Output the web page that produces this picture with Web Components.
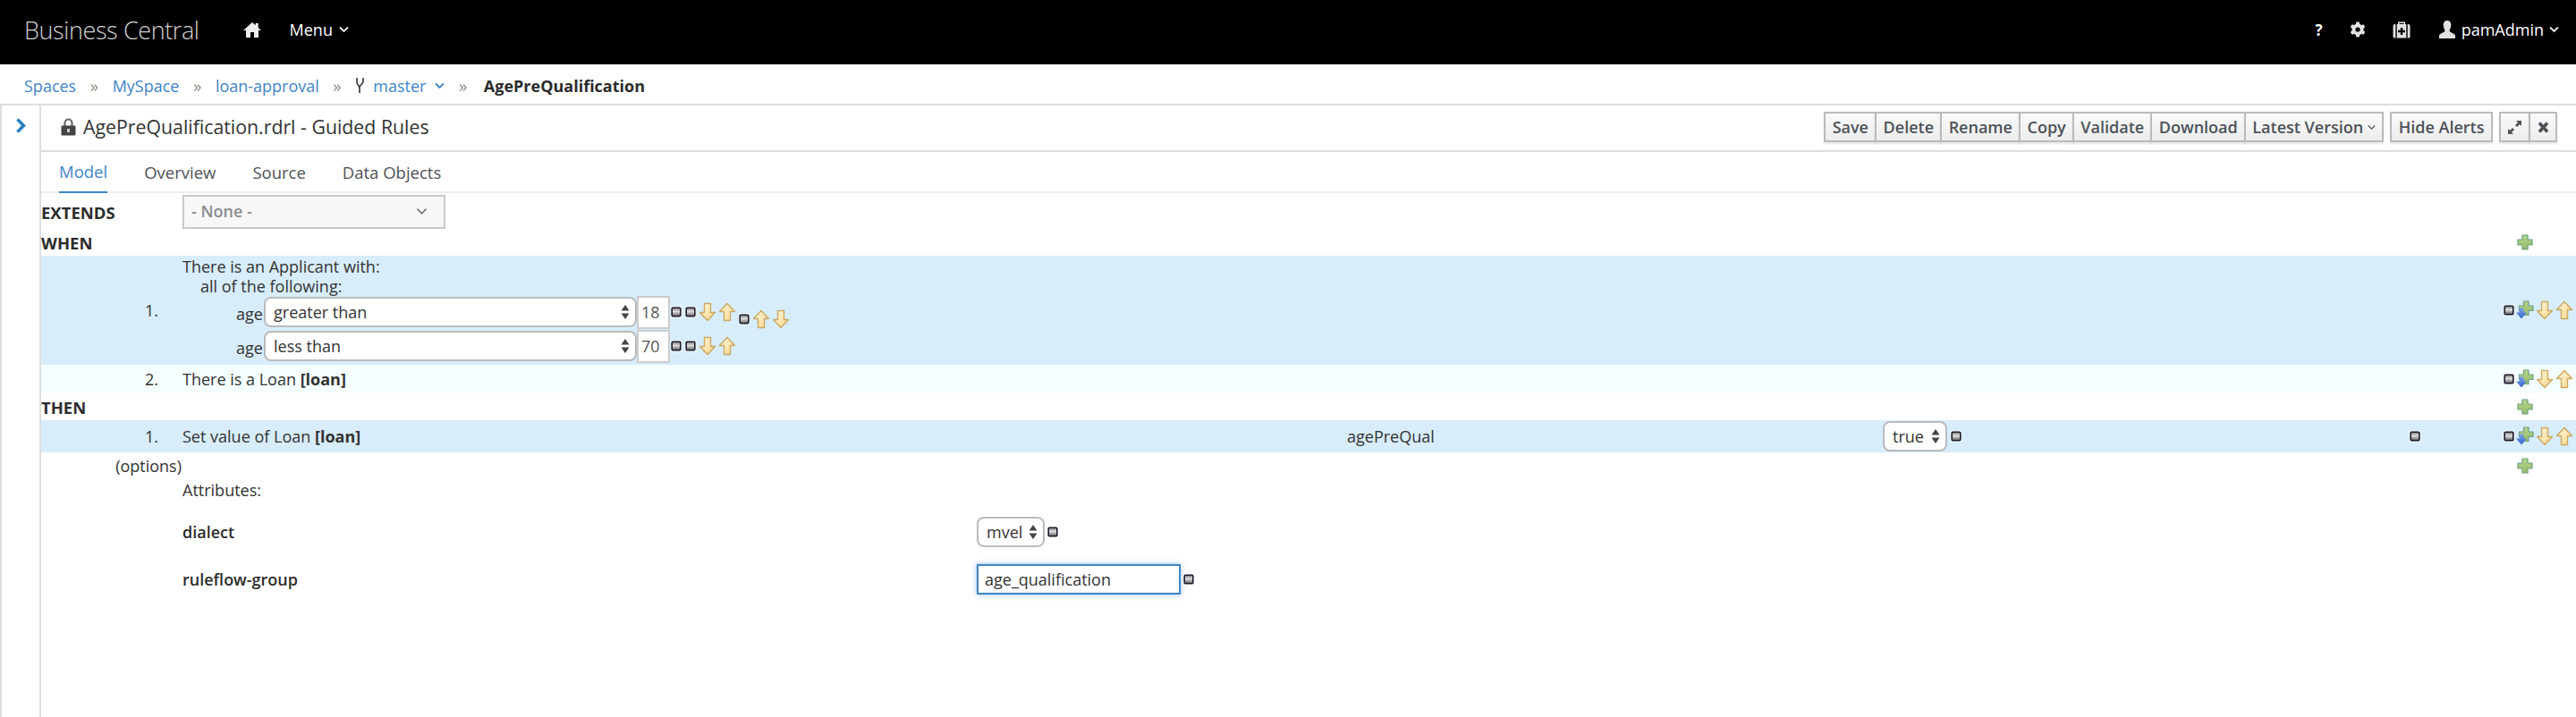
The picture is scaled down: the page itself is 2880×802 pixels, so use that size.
<!DOCTYPE html>
<html><head><meta charset="utf-8">
<style>
html,body{margin:0;padding:0;height:802px;overflow:hidden;background:#fff;font-family:"Open Sans","Liberation Sans",sans-serif;color:#363636}
</style></head><body>
<bc-app></bc-app>
<script>
const ICONS={
 minus:[14,14,`<defs><linearGradient id="g" x1="0" y1="0" x2="0" y2="1"><stop offset="0" stop-color="#777"/><stop offset=".45" stop-color="#ddd"/><stop offset=".6" stop-color="#bbb"/><stop offset="1" stop-color="#555"/></linearGradient></defs><rect x=".5" y=".5" width="13" height="13" fill="#fff" opacity=".7"/><rect x="2.200" y="2.200" width="9.600" height="9.600" rx="1" fill="url(#g)" stroke="#1c1c2a" stroke-width="1.600"/>`],
 down:[20,22,`<defs><linearGradient id="g" x1="0" y1="0" x2="1" y2="1"><stop offset="0" stop-color="#fff8dc"/><stop offset="1" stop-color="#f7d58a"/></linearGradient></defs><path d="M6.500 1.500h7v10h5L10 20.500 1.500 11.500h5z" fill="url(#g)" stroke="#cda862" stroke-width="1.400" stroke-linejoin="round"/>`],
 up:[20,22,`<defs><linearGradient id="g" x1="0" y1="0" x2="1" y2="1"><stop offset="0" stop-color="#fff8dc"/><stop offset="1" stop-color="#f7d58a"/></linearGradient></defs><path d="M6.500 20.500h7v-10h5L10 1.500 1.500 10.500h5z" fill="url(#g)" stroke="#cda862" stroke-width="1.400" stroke-linejoin="round"/>`],
 plus:[18,18,`<defs><linearGradient id="g" x1="0" y1="0" x2="0" y2="1"><stop offset="0" stop-color="#b4d487"/><stop offset="1" stop-color="#98bb6c"/></linearGradient></defs><path d="M6 1h6v5h5v6h-5v5H6v-5H1V6h5z" fill="url(#g)" stroke="#6ba283" stroke-width="1.200" stroke-linejoin="round"/>`],
 addmove:[20,22,`<defs><linearGradient id="g" x1="0" y1="0" x2="0" y2="1"><stop offset="0" stop-color="#b4d487"/><stop offset="1" stop-color="#98bb6c"/></linearGradient><linearGradient id="b" x1="0" y1="0" x2="0" y2="1"><stop offset="0" stop-color="#7fa3ea"/><stop offset="1" stop-color="#2f63cf"/></linearGradient></defs><path d="M8.500 1h5.500v5h5v5.500h-5v5H8.500v-5H3.500V6h5z" fill="url(#g)" stroke="#6ba283" stroke-width="1.200" stroke-linejoin="round"/><path d="M3.500 8.500h5v5h3.500L6 20.500 0 13.500h3.500z" fill="url(#b)"/>`]
};
const def=(n,html)=>customElements.define(n,class extends HTMLElement{constructor(){super();this.attachShadow({mode:'open'}).innerHTML=html}});

customElements.define('rule-icon',class extends HTMLElement{connectedCallback(){if(this.shadowRoot)return;const k=this.getAttribute('t'),[w,h,b]=ICONS[k];
 this.attachShadow({mode:'open'}).innerHTML=`<style>:host{display:inline-flex;flex:none;width:${w}px;height:${h}px}svg{display:block}</style><svg width="${w}" height="${h}" viewBox="0 0 ${w} ${h}">${b}</svg>`;}});

def('app-header',`<style>
:host{display:flex;align-items:center;height:72px;background:#000;color:#fff;font-size:18px;flex:none;box-sizing:border-box;padding:0 19px 6px 27px}
.brand{font-size:27px;font-weight:300;color:#d1d1d1;letter-spacing:-.4px;margin-right:49px}
.it{display:flex;align-items:center}
.sp{flex:1}
svg{display:block}
</style>
<span class="brand">Business Central</span>
<span class="it" style="margin-right:32px"><svg width="20" height="18" viewBox="0 0 20 18"><path d="M10 1 0 10h3v8h5v-6h4v6h5v-8h3l-3.300-3V2h-3v2.300z" fill="#eee"/></svg></span>
<span class="it">Menu<svg style="margin-left:7px" width="11" height="8" viewBox="0 0 11 8"><path d="M1 1.500l4.500 4.500L10 1.500" fill="none" stroke="#eee" stroke-width="1.800"/></svg></span>
<span class="sp"></span>
<span class="it" style="font-weight:700;font-size:17px;margin-right:30px">?</span>
<span class="it" style="margin-right:30px"><svg width="18" height="18" viewBox="0 0 18 18"><g fill="#e2e2e2"><circle cx="9" cy="9" r="6.500"/><rect x="7" y="0.500" width="4" height="17" rx="1"/><rect x="7" y="0.500" width="4" height="17" rx="1" transform="rotate(60 9 9)"/><rect x="7" y="0.500" width="4" height="17" rx="1" transform="rotate(120 9 9)"/></g><circle cx="9" cy="9" r="2.600" fill="#000"/></svg></span>
<span class="it" style="margin-right:32px"><svg width="20" height="20" viewBox="0 0 20 20"><path d="M6 4V1.500h8V4h3.500q2 0 2 2v12q0 1.500-2 1.500H2.500q-2 0-2-1.500V6q0-2 2-2zM7.500 4h5V3h-5z" fill="#e2e2e2"/><path d="M4 4v15.500M16 4v15.500" stroke="#000" stroke-width="1.400"/><path d="M8.800 8h2.400v2.800H14v2.400h-2.800V16H8.800v-2.800H6v-2.400h2.800z" fill="#000"/></svg></span>
<span class="it"><svg style="margin-right:7px" width="18" height="20" viewBox="0 0 18 20"><path d="M9 0c3 0 4.300 2.200 4.300 5S11.700 10 11.500 11.500c0 1.500 6.500 3 6.500 5.500v3H0v-3c0-2.500 6.500-4 6.500-5.500C6.300 10 4.700 7.800 4.700 5S6 0 9 0z" fill="#e2e2e2"/></svg><span>pamAdmin</span><svg style="margin-left:6px" width="11" height="8" viewBox="0 0 11 8"><path d="M1 1.500l4.500 4.500L10 1.500" fill="none" stroke="#eee" stroke-width="1.800"/></svg></span>`);

def('bread-crumb',`<style>
:host{display:flex;align-items:center;height:46px;box-sizing:border-box;border-bottom:2px solid #dedede;padding:4px 0 0 27px;font-size:18px;color:#3f85c6;flex:none}
.s{color:#8f8f8f;margin:0 15.500px;font-size:19px}
b{color:#2b2b2b;font-weight:700;margin-left:3px}
svg{display:block;margin-right:9px}
</style>
<span>Spaces</span><span class="s">»</span><span>MySpace</span><span class="s">»</span><span>loan-approval</span><span class="s">»</span>
<svg width="11" height="20" viewBox="0 0 11 20"><path d="M2 1v5c0 3 3 3.500 3 6.500V18M9 1v4c0 3-4 4-4 7" fill="none" stroke="#333" stroke-width="1.600"/></svg>
<span>master</span><svg style="margin:0 0 0 10px" width="11" height="8" viewBox="0 0 11 8"><path d="M1 1.500l4.500 4.500L10 1.500" fill="none" stroke="#3f85c6" stroke-width="1.800"/></svg><span class="s">»</span><b>AgePreQualification</b>`);

def('side-rail',`<style>
:host{display:flex;justify-content:center;align-items:flex-start;width:46px;box-sizing:border-box;border-left:2px solid #dedede;border-right:2px solid #dedede;padding-top:14px;flex:none}
svg{display:block}
</style><svg width="12" height="17" viewBox="0 0 12 17"><path d="M2.500 1.500l7 7-7 7" fill="none" stroke="#2b7fc3" stroke-width="3.600"/></svg>`);

def('tool-btn',`<style>
:host{display:inline-flex;align-items:center;justify-content:center;height:30px;box-sizing:content-box;border:2px solid #bbb;margin-left:-2px;padding:0 7.300px;background:linear-gradient(#fafafa,#ededed);color:#4d5258;font-size:18px;font-weight:600;box-shadow:0 2px 2px rgba(0,0,0,.1)}
</style><slot></slot>`);

def('title-bar',`<style>
:host{display:flex;align-items:center;height:52px;box-sizing:border-box;border-bottom:2px solid #dedede;padding:0 21px 2px 22px;flex:none}
.t{font-size:21.300px;color:#333;margin:0 0 2px 8px;flex:1}
.g{display:flex;margin-left:7px;padding-left:2px}
svg{display:block}
</style>
<svg width="17" height="20" viewBox="0 0 17 20"><path d="M4.500 9V5.500a4 4 0 0 1 8 0V9" fill="none" stroke="#666" stroke-width="2.200"/><rect x="0.500" y="8.500" width="16" height="11" rx="1.200" fill="#444"/><rect x="7" y="12" width="3" height="4" fill="#ccc"/></svg>
<span class="t">AgePreQualification.rdrl - Guided Rules</span>
<span class="g"><tool-btn>Save</tool-btn><tool-btn>Delete</tool-btn><tool-btn>Rename</tool-btn><tool-btn>Copy</tool-btn><tool-btn>Validate</tool-btn><tool-btn>Download</tool-btn><tool-btn>Latest Version<svg style="margin-left:5px" width="9" height="7" viewBox="0 0 11 8"><path d="M1 1.500l4.500 4.500L10 1.500" fill="none" stroke="#4d5258" stroke-width="1.600"/></svg></tool-btn></span>
<span class="g"><tool-btn>Hide Alerts</tool-btn></span>
<span class="g"><tool-btn><svg width="17" height="17" viewBox="0 0 17 17"><path d="M10 1h6v6l-2-2-3 3-2-2 3-3zM7 16H1v-6l2 2 3-3 2 2-3 3z" fill="#4d5258"/></svg></tool-btn><tool-btn><svg width="13" height="15" viewBox="0 0 13 15"><path d="M2 2.500l9 10M11 2.500l-9 10" stroke="#4d5258" stroke-width="3.600"/></svg></tool-btn></span>`);

def('tab-bar',`<style>
:host{display:flex;height:46px;box-sizing:border-box;border-bottom:2px solid #ededed;padding-left:20px;gap:41px;font-size:18.500px;color:#4d5258;flex:none}
span{display:flex;align-items:center;height:46px;box-sizing:border-box;padding-bottom:2px;margin-bottom:-2px}
.a{color:#3f85c6;border-bottom:2px solid #3f85c6}
</style><span class="a">Model</span><span>Overview</span><span>Source</span><span>Data Objects</span>`);

def('native-select',`<style>
:host{display:inline-flex;align-items:center;box-sizing:border-box;height:34px;border:2px solid #bbb;border-radius:8px;background:#fff;font-size:18px;color:#333;padding:0 6px 0 9px;flex:none}
.v{flex:1}
svg{display:block;margin-left:7px;flex:none}
</style><span class="v"><slot></slot></span><svg width="10" height="18" viewBox="0 0 10 18"><path d="M5 1l4.500 6.500h-9zM5 17l4.500-6.500h-9z" fill="#444"/></svg>`);

def('num-box',`<style>
:host{display:inline-flex;align-items:center;box-sizing:border-box;width:37px;height:37px;border:2px solid #ccc;background:#fff;color:#555;font-size:18px;padding-left:3px;flex:none}
</style><slot></slot>`);

def('row-tools',`<style>
:host{display:flex;align-items:center;justify-content:flex-end;gap:1px;padding-right:3px}
</style><rule-icon t="minus"></rule-icon><rule-icon t="addmove"></rule-icon><rule-icon t="down" style="margin-left:1px"></rule-icon><rule-icon t="up" style="margin-left:1px"></rule-icon>`);

def('rule-row',`<style>
:host{display:grid;grid-template-columns:158px 1fr 80px;align-items:center;font-size:18px;color:#333;background:var(--bg,transparent)}
.n{padding-left:116px;white-space:nowrap}
</style><span class="n"><slot name="n"></slot></span><div class="body"><slot></slot></div><row-tools></row-tools>`);

def('section-head',`<style>
:host{display:flex;align-items:center;justify-content:space-between;font-size:18.500px;font-weight:700;color:#2c2c2c;padding-right:48px;box-sizing:border-box}
</style><slot></slot><rule-icon t="plus"></rule-icon>`);

def('rule-editor',`<style>
:host{display:block;font-size:18px;color:#333}
.ext{display:grid;grid-template-columns:158px 294px;height:38px;align-items:center;padding-top:2px}
.ext b{font-weight:700;font-size:18.500px;color:#2c2c2c}
.sel{display:flex;align-items:center;justify-content:space-between;height:38px;box-sizing:border-box;border:2px solid #c8c8c8;background:#f7f7f7;padding:0 18px 2px 8px;font-size:18px;font-weight:600;color:#8b8d8f}
section-head{height:30px}
.cond{display:flex;flex-direction:column;line-height:22px;padding-top:1px}
.a1{padding-left:20px}
.cl{display:flex;align-items:center;height:38px;padding-left:60px}
.cl .age{width:31px;padding-top:4px}
.cl native-select{width:417px}
.cl rule-icon+rule-icon{margin-left:2px}
.grp{display:flex;align-items:center;gap:2px;margin:60px 0 0 2px}
.wrap{display:flex;align-items:flex-start;height:122px}
.opts{display:grid;grid-template-columns:158px 1fr 80px;align-items:center;height:30px}
.opt{text-align:right;padding-right:1px}
.attr{padding-left:158px;display:grid;grid-template-columns:888px 1fr;align-items:center}
.attr b{font-weight:600;color:#2c2c2c}
.inp{display:inline-flex;align-items:center;width:228px;height:34px;box-sizing:border-box;border:2px solid #3f85c6;box-shadow:0 0 6px rgba(63,133,198,.55);padding-left:7px;color:#333}
.pr{display:flex;align-items:center;gap:2px}
.setv{display:grid;grid-template-columns:1302px 599px 72px 3px 14px 499px 14px;align-items:center}
</style>
<div class="ext"><b>EXTENDS</b><div class="sel"><span>- None -</span><svg width="13" height="9" viewBox="0 0 11 8"><path d="M1 1.500l4.500 4.500L10 1.500" fill="none" stroke="#777" stroke-width="1.500"/></svg></div></div>
<section-head>WHEN</section-head>
<rule-row style="--bg:#d7edfc;height:122px"><span slot="n">1.</span>
 <div class="wrap"><div class="cond"><div>There is an Applicant with:</div><div class="a1">all of the following:</div>
  <div class="cl" style="margin-top:-1px"><span class="age">age</span><native-select>greater than</native-select><num-box>18</num-box><rule-icon t="minus"></rule-icon><rule-icon t="minus"></rule-icon><rule-icon t="down"></rule-icon><rule-icon t="up"></rule-icon></div>
  <div class="cl"><span class="age">age</span><native-select>less than</native-select><num-box>70</num-box><rule-icon t="minus"></rule-icon><rule-icon t="minus"></rule-icon><rule-icon t="down"></rule-icon><rule-icon t="up"></rule-icon></div>
 </div><div class="grp"><rule-icon t="minus"></rule-icon><rule-icon t="up"></rule-icon><rule-icon t="down"></rule-icon></div></div>
</rule-row>
<rule-row style="--bg:#f5ffff;height:32px"><span slot="n">2.</span><span>There is a Loan <b>[loan]</b></span></rule-row>
<section-head>THEN</section-head>
<rule-row style="--bg:#d7edfc;height:36px"><span slot="n">1.</span>
 <div class="setv"><span>Set value of Loan <b>[loan]</b></span><span>agePreQual</span><native-select>true</native-select><span></span><rule-icon t="minus"></rule-icon><span></span><rule-icon t="minus"></rule-icon></div>
</rule-row>
<div class="opts"><span class="opt">(options)</span><span></span><span style="display:flex;justify-content:flex-end;padding-right:48px"><rule-icon t="plus"></rule-icon></span></div>
<div style="padding-left:158px;line-height:24px;height:34px">Attributes:</div>
<div class="attr" style="height:50px"><b>dialect</b><span class="pr"><native-select>mvel</native-select><rule-icon t="minus"></rule-icon></span></div>
<div class="attr" style="height:56px"><b>ruleflow-group</b><span class="pr"><span class="inp">age_qualification</span><rule-icon t="minus"></rule-icon></span></div>`);

def('bc-app',`<style>
:host{display:flex;flex-direction:column;height:802px;overflow:hidden}
.m{display:flex;flex:1;min-height:0}
.c{flex:1;display:flex;flex-direction:column;min-width:0}
</style>
<app-header></app-header><bread-crumb></bread-crumb>
<div class="m"><side-rail></side-rail><div class="c"><title-bar></title-bar><tab-bar></tab-bar><rule-editor></rule-editor></div></div>`);
</script>
</body></html>
